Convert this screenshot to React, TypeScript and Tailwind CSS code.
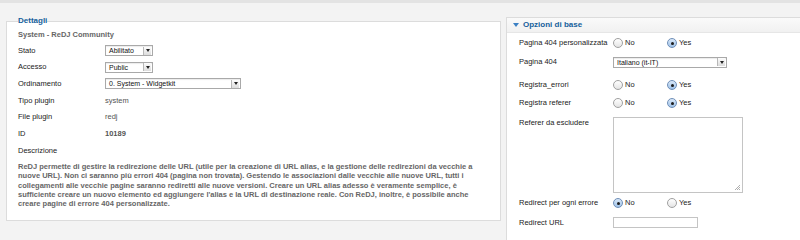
function Select({ label, width }: { label: string; width: string }) {
  return (
    <div
      className={`${width} h-[11px] flex items-center justify-between bg-white border border-[#a9a9a9] pl-[3px] pr-[1px] shadow-[inset_0_1px_1px_rgba(0,0,0,0.08)]`}
    >
      <span className="text-[7px] leading-none text-[#111] whitespace-nowrap">{label}</span>
      <span className="w-[8px] h-[8px] flex items-center justify-center bg-gradient-to-b from-[#fdfdfd] to-[#dcdcdc] border-l border-[#b8b8b8]">
        <span className="w-0 h-0 border-l-[2.5px] border-r-[2.5px] border-t-[3px] border-l-transparent border-r-transparent border-t-[#222]" />
      </span>
    </div>
  );
}

function Radio({ checked, label }: { checked: boolean; label: string }) {
  return (
    <div className="flex items-center gap-[2px] w-[54px]">
      {checked ? (
        <span className="w-[10px] h-[10px] rounded-full border border-[#6f8fb8] bg-gradient-to-b from-[#d9e8f8] to-[#9fc2e8] flex items-center justify-center">
          <span className="w-[3px] h-[3px] rounded-full bg-[#1c1c1c]" />
        </span>
      ) : (
        <span className="w-[10px] h-[10px] rounded-full border border-[#a0a0a0] bg-gradient-to-b from-[#ffffff] to-[#e4e4e4]" />
      )}
      <span className="text-[7.5px] text-[#222]">{label}</span>
    </div>
  );
}

function LeftRow({
  label,
  h,
  children,
}: {
  label: string;
  h: string;
  children?: React.ReactNode;
}) {
  return (
    <div className={`${h} flex items-center`}>
      <span className="w-[87px] text-[7.5px] text-[#222]">{label}</span>
      {children}
    </div>
  );
}

function RightRow({
  label,
  h,
  children,
}: {
  label: string;
  h: string;
  children?: React.ReactNode;
}) {
  return (
    <div className={`${h} flex items-center`}>
      <span className="w-[94px] text-[7.5px] text-[#222] whitespace-nowrap">{label}</span>
      {children}
    </div>
  );
}

const desc = [
  "ReDJ permette di gestire la redirezione delle URL (utile per la creazione di URL alias, e la gestione delle redirezioni da vecchie a",
  "nuove URL). Non ci saranno più errori 404 (pagina non trovata). Gestendo le associazioni dalle vecchie alle nuove URL, tutti i",
  "collegamenti alle vecchie pagine saranno rediretti alle nuove versioni. Creare un URL alias adesso è veramente semplice, è",
  "sufficiente creare un nuovo elemento ed aggiungere l'alias e la URL di destinazione reale. Con ReDJ, inoltre, è possibile anche",
  "creare pagine di errore 404 personalizzate.",
];

export default function App() {
  return (
    <div className="w-[800px] h-[240px] overflow-hidden bg-[#f3f3f3] border-t-[3px] border-[#e3e3e3] font-['Liberation_Sans',Arial,sans-serif] flex items-start gap-[5px] pl-[6px] pt-[12px]">
      <fieldset className="w-[495px] h-[206px] shrink-0 bg-white border border-[#dcdcdc] pl-[11px] pr-[10px] pt-0 pb-0 m-0">
        <legend className="px-0 text-[8px] font-bold text-[#15609b]">Dettagli</legend>
        <div className="h-[15px] flex items-center text-[7.5px] font-bold text-[#666]">
          System - ReDJ Community
        </div>
        <LeftRow label="Stato" h="h-[17px]">
          <Select label="Abilitato" width="w-[48px]" />
        </LeftRow>
        <LeftRow label="Accesso" h="h-[16px]">
          <Select label="Public" width="w-[48px]" />
        </LeftRow>
        <LeftRow label="Ordinamento" h="h-[17px]">
          <Select label="0. System - Widgetkit" width="w-[136px]" />
        </LeftRow>
        <LeftRow label="Tipo plugin" h="h-[17px]">
          <span className="text-[7.5px] text-[#555]">system</span>
        </LeftRow>
        <LeftRow label="File plugin" h="h-[16px]">
          <span className="text-[7.5px] text-[#555]">redj</span>
        </LeftRow>
        <LeftRow label="ID" h="h-[17px]">
          <span className="text-[7.5px] font-bold text-[#555]">10189</span>
        </LeftRow>
        <LeftRow label="Descrizione" h="h-[17px]" />
        <div className="mt-[3px] text-[7.5px] leading-[9.3px] font-bold text-[#666]">
          {desc.map((l, i) => (
            <div key={i} className="whitespace-nowrap">
              {l}
            </div>
          ))}
        </div>
      </fieldset>

      <div className="flex-1 h-[240px] mt-[2px] bg-white border border-[#dcdcdc] border-r-0">
        <div className="h-[15px] flex items-center gap-[4px] pl-[6px] bg-gradient-to-b from-[#fafafa] to-[#f1f1f1] border-b border-[#e6e6e6]">
          <span className="w-0 h-0 border-l-[3px] border-r-[3px] border-t-[4px] border-l-transparent border-r-transparent border-t-[#3b80c4]" />
          <span className="text-[8px] font-bold text-[#15609b]">Opzioni di base</span>
        </div>
        <div className="pl-[12px] flex flex-col">
          <RightRow label="Pagina 404 personalizzata" h="h-[20px]">
            <div className="flex">
              <Radio checked={false} label="No" />
              <Radio checked label="Yes" />
            </div>
          </RightRow>
          <RightRow label="Pagina 404" h="h-[18px]">
            <Select label="Italiano (it-IT)" width="w-[114px]" />
          </RightRow>
          <RightRow label="Registra_errori" h="h-[18px] mt-[5px]">
            <div className="flex">
              <Radio checked={false} label="No" />
              <Radio checked label="Yes" />
            </div>
          </RightRow>
          <RightRow label="Registra referer" h="h-[18px]">
            <div className="flex">
              <Radio checked={false} label="No" />
              <Radio checked label="Yes" />
            </div>
          </RightRow>
          <div className="mt-[5px] flex items-start">
            <span className="w-[94px] text-[7.5px] text-[#222] leading-[9px] pt-[1px]">
              Referer da escludere
            </span>
            <div className="relative w-[130px] h-[76px] border border-[#c4c4c4] bg-white">
              <svg className="absolute right-[1px] bottom-[1px]" width="7" height="7" viewBox="0 0 7 7">
                <path d="M6 1L1 6M6 3L3 6M6 5L5 6" stroke="#9a9a9a" strokeWidth="0.8" />
              </svg>
            </div>
          </div>
          <RightRow label="Redirect per ogni errore" h="h-[20px]">
            <div className="flex">
              <Radio checked label="No" />
              <Radio checked={false} label="Yes" />
            </div>
          </RightRow>
          <RightRow label="Redirect URL" h="h-[19px]">
            <div className="w-[85px] h-[11px] border border-[#c4c4c4] bg-white" />
          </RightRow>
        </div>
      </div>
    </div>
  );
}
